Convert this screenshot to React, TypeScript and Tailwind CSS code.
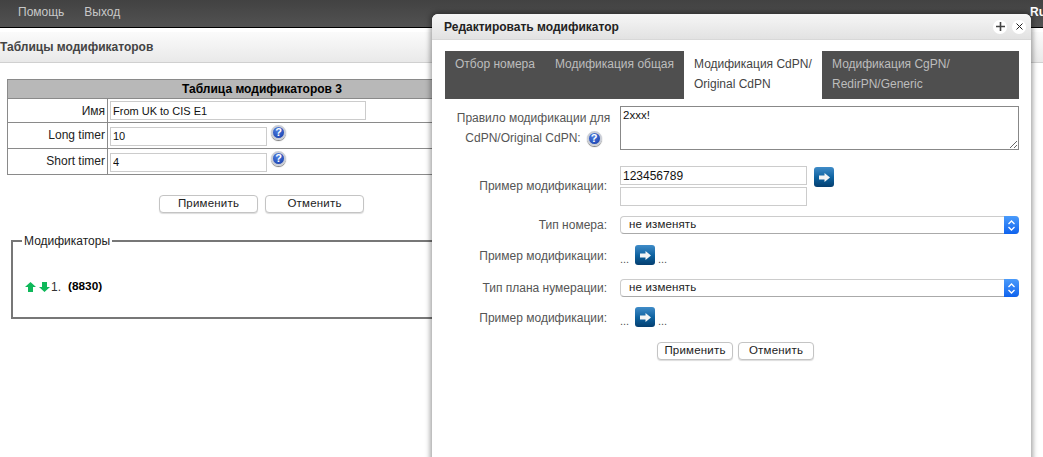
import React from "react";

function Help({ className = "" }: { className?: string }) {
  return (
    <span className={`inline-flex h-[15px] w-[15px] shrink-0 items-center justify-center rounded-full border-2 border-[#c9cdd6] bg-[radial-gradient(circle_at_40%_30%,#4f7fe0,#1338a8)] text-[11px] leading-none font-bold text-white shadow-[0_1px_1px_#777] ${className}`}>
      ?
    </span>
  );
}

function Go() {
  return (
    <span className="inline-flex h-[20px] w-[20px] items-center justify-center rounded-[3px] bg-gradient-to-b from-[#3f8cc8] via-[#0e64a2] to-[#053f70]">
      <svg width="13" height="11" viewBox="0 0 13 11">
        <path d="M1 3.5h5.5V1l5.5 4.5L6.5 10V7.5H1z" fill="#f4f4f4" />
      </svg>
    </span>
  );
}

function Btn({ label, className }: { label: string; className: string }) {
  return (
    <button className={`h-[18px] rounded-[4px] border border-[#c4c4c4] bg-white text-[11.5px] leading-none tracking-[0.2px] text-[#222] shadow-[0_1px_1px_#ddd] ${className}`}>
      {label}
    </button>
  );
}

function Sel() {
  return (
    <div className="flex h-[18px] w-[399px] items-center justify-between rounded-[4px] border border-[#ccc] border-b-[#aaa] bg-white pl-[8px] text-[11.5px] tracking-[0.15px] text-[#222]">
      <span>не изменять</span>
      <span className="-mr-px flex h-[18px] w-[15px] items-center justify-center rounded-r-[4px] bg-gradient-to-b from-[#4a9bfb] to-[#0d62ee]">
        <svg width="9" height="13" viewBox="0 0 9 13" fill="none" stroke="#fff" strokeWidth="1.3">
          <path d="M1.5 5 4.5 2l3 3M1.5 8l3 3 3-3" />
        </svg>
      </span>
    </div>
  );
}

function Row({ label, children, className = "", labelClass = "" }: { label: React.ReactNode; children: React.ReactNode; className?: string; labelClass?: string }) {
  return (
    <div className={`flex items-center ${className}`}>
      <div className={`w-[162px] shrink-0 text-right text-[12px] leading-[20px] text-[#555] ${labelClass}`}>{label}</div>
      <div className="ml-[13px] shrink-0">{children}</div>
    </div>
  );
}

function Dots() {
  return (
    <div className="flex items-end gap-[3px] text-[11px] leading-[12px] text-[#555]">
      <span className="w-[12px]">...</span>
      <Go />
      <span>...</span>
    </div>
  );
}

const Input = ({ value, w }: { value: string; w: string }) => (
  <input readOnly value={value} className={`block h-[19px] border border-[#ccc] bg-white px-[2px] text-[11px] text-[#111] outline-none ${w}`} />
);

export default function App() {
  return (
    <div className="relative h-[457px] w-[1043px] overflow-hidden bg-white font-['Liberation_Sans',Arial,sans-serif] text-[12px]">
      <header className="flex h-[28px] items-center gap-[20px] border-b border-black bg-gradient-to-b from-[#424242] to-[#525252] pb-[3px] pl-[18px] text-[12px] text-[#c8c8c8]">
        <span>Помощь</span>
        <span>Выход</span>
        <span className="-mr-[3px] ml-auto text-[12px] font-bold text-white">Ru</span>
      </header>
      <div className="mt-[4px] flex h-[31px] items-center border-b border-[#d0d0d0] bg-gradient-to-b from-[#fbfbfb] to-[#e9e9e9] text-[12px] font-bold text-[#444]">
        Таблицы модификаторов
      </div>

      <div className="mt-[16px] ml-[7px] w-[1020px]">
        <table className="w-[1020px] border-collapse border border-[#8a8a8a] text-[12px] text-[#222]">
          <tbody>
            <tr className="h-[19px] border-b border-[#8a8a8a] bg-[#b8b8b8]">
              <th colSpan={2} className="pr-[510px] pl-0 text-center text-[12px] font-bold text-black">
                Таблица модификаторов 3
              </th>
            </tr>
            <tr className="h-[24px] border-b border-[#8a8a8a]">
              <td className="w-[100px] border-r border-[#8a8a8a] pr-[2px] text-right">Имя</td>
              <td className="pl-[2px]"><Input value="From UK to CIS E1" w="w-[256px]" /></td>
            </tr>
            <tr className="h-[26px] border-b border-[#8a8a8a]">
              <td className="border-r border-[#8a8a8a] pr-[2px] pb-[2px] text-right">Long timer</td>
              <td className="pt-[1px] pl-[2px]"><div className="flex items-start gap-[4px]"><Input value="10" w="w-[157px]" /><Help className="-mt-[2px]" /></div></td>
            </tr>
            <tr className="h-[26px] border-b border-[#8a8a8a]">
              <td className="border-r border-[#8a8a8a] pr-[2px] pb-[2px] text-right">Short timer</td>
              <td className="pt-[1px] pl-[2px]"><div className="flex items-start gap-[4px]"><Input value="4" w="w-[157px]" /><Help className="-mt-[2px]" /></div></td>
            </tr>
          </tbody>
        </table>
      </div>

      <div className="mt-[20px] ml-[159px] flex gap-[7px]">
        <Btn label="Применить" className="w-[99px]" />
        <Btn label="Отменить" className="w-[99px]" />
      </div>

      <fieldset className="mt-[21px] ml-[11px] h-[85px] w-[1020px] border-2 border-[#777] pl-[12px]">
        <legend className="-ml-[3px] px-[2px] text-[12px] leading-[14px] text-[#222]">Модификаторы</legend>
        <div className="mt-[30px] flex items-center text-[12px] text-[#222]">
          <svg width="11" height="10" viewBox="0 0 11 10" className="mr-[3px]"><path d="M5.5 0 11 5H8v5H3V5H0z" fill="#0fb85a" /></svg>
          <svg width="11" height="10" viewBox="0 0 11 10" className="-mt-[1px] mr-[1px]"><path d="M3 0h5v5h3l-5.5 5L0 5h3z" fill="#0fb85a" /></svg>
          <span className="text-[#333]">1.</span>
          <b className="ml-[7px] text-[11.8px] text-black">(8830)</b>
        </div>
      </fieldset>

      <div className="absolute top-[14px] left-[432px] h-[470px] w-[599px] rounded-t-[6px] bg-white shadow-[0_0_5px_2px_rgba(0,0,0,0.35)]">
        <div className="flex h-[26px] items-center justify-between rounded-t-[6px] border-b border-[#d8d8d8] bg-gradient-to-b from-[#f6f6f6] to-[#e2e2e2] pr-[5px] pl-[12px]">
          <span className="text-[12px] font-bold text-[#222]">Редактировать модификатор</span>
          <span className="flex gap-[5px]">
            <span className="flex h-[14px] w-[14px] items-center justify-center rounded-full bg-white">
              <svg width="9" height="9" viewBox="0 0 9 9"><path d="M4.5 0v9M0 4.5h9" stroke="#444" strokeWidth="1.6" /></svg>
            </span>
            <span className="flex h-[14px] w-[14px] items-center justify-center rounded-full bg-white">
              <svg width="7" height="7" viewBox="0 0 7 7"><path d="M.5.5l6 6M6.5.5l-6 6" stroke="#222" strokeWidth="1" /></svg>
            </span>
          </span>
        </div>

        <div className="pr-[10px] pl-[13px]">
          <div className="mt-[11px] flex h-[48px] w-[574px] text-[12px] leading-[20px]">
            <div className="flex w-[239px] gap-[20px] bg-[#4f4f4f] pt-[3px] pl-[10px] text-[#bdbdbd]">
              <span>Отбор номера</span>
              <span>Модификация общая</span>
            </div>
            <div className="w-[138px] bg-white pt-[3px] pl-[10px] text-[#444]">
              Модификация CdPN/
              <br />
              Original CdPN
            </div>
            <div className="w-[197px] bg-[#4f4f4f] pt-[3px] pl-[10px] text-[#bdbdbd]">
              Модификация CgPN/
              <br />
              RedirPN/Generic
            </div>
          </div>

          <div className="mt-[7px] flex">
            <div className="mt-[2px] w-[177px] shrink-0 text-center text-[12px] leading-[20px] whitespace-nowrap text-[#555]">
              Правило модификации для
              <br />
              <span className="inline-flex items-center gap-[6px]">CdPN/Original CdPN: <Help /></span>
            </div>
            <textarea readOnly value="2xxx!" className="-ml-[2px] h-[44px] w-[399px] shrink-0 border border-[#888] bg-white px-[2px] py-0 text-[11.5px] leading-[17px] text-[#111] outline-none" />
          </div>

          <Row label="Пример модификации:" className="mt-[16px] h-[40px]">
            <div className="flex items-start gap-[7px]">
              <div className="flex flex-col gap-[2px]">
                <input readOnly value="123456789" className="block h-[19px] w-[187px] border border-[#ccc] bg-white px-[2px] text-[12px] text-[#111] outline-none" />
                <Input value="" w="w-[187px]" />
              </div>
              <div className="mt-[1px]"><Go /></div>
            </div>
          </Row>
          <Row label="Тип номера:" className="mt-[10px] h-[18px]"><Sel /></Row>
          <Row label="Пример модификации:" labelClass="pt-[2px]" className="mt-[11px] h-[20px]"><Dots /></Row>
          <Row label="Тип плана нумерации:" className="mt-[14px] h-[18px]"><Sel /></Row>
          <Row label="Пример модификации:" labelClass="pt-[2px]" className="mt-[10px] h-[20px]"><Dots /></Row>

          <div className="mt-[15px] ml-[212px] flex gap-[5px]">
            <Btn label="Применить" className="w-[76px]" />
            <Btn label="Отменить" className="w-[76px]" />
          </div>
        </div>
      </div>
    </div>
  );
}
